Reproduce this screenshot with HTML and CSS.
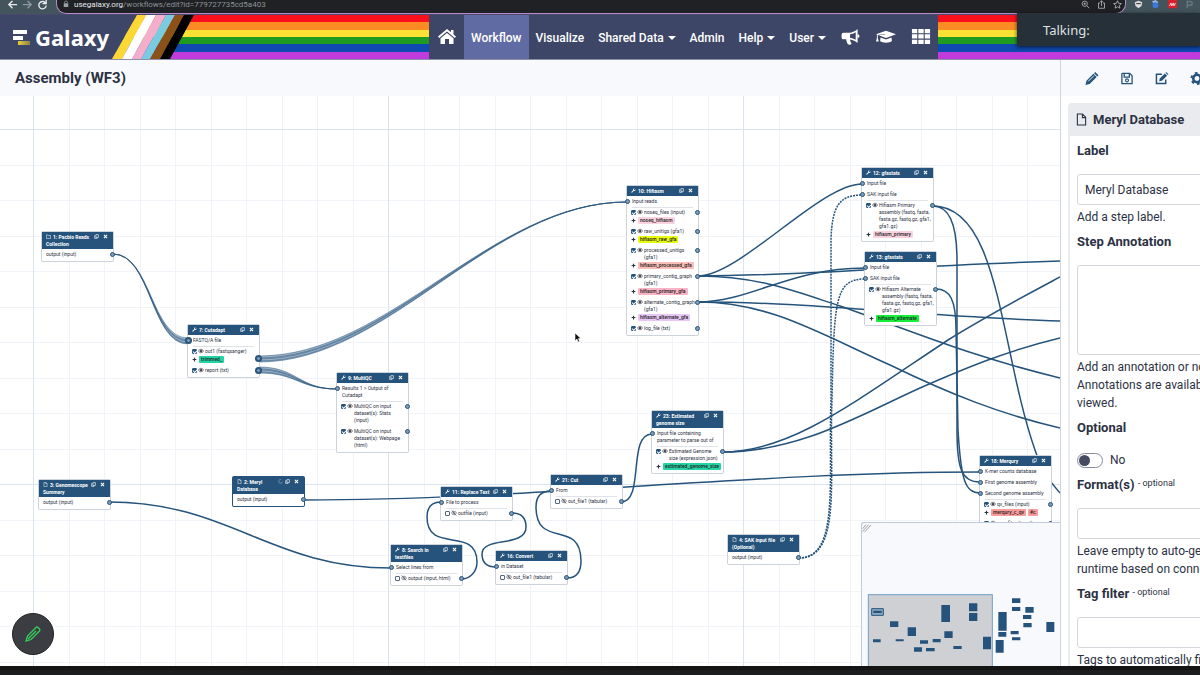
FILE: index.html
```
<!DOCTYPE html>
<html lang="en">
<head>
<meta charset="utf-8">
<title>Galaxy | Workflow Editor</title>
<link rel="stylesheet" href="styles.css">
</head>
<body>
<svg class="sprite" aria-hidden="true">
  <symbol id="wrench" viewBox="0 0 16 16"><path d="M15 4a4.500 4.500 0 0 1-6 5L4 14.500a1.800 1.800 0 0 1-2.500-2.500L7 7a4.500 4.500 0 0 1 5-6L9.500 3.500l.5 2.500 2.500.5z"/></symbol>
  <symbol id="file" viewBox="0 0 16 16"><path d="M3 1h6l4 4v10H3zM9 1v4h4" fill="none" stroke="currentColor" stroke-width="1.600"/></symbol>
  <symbol id="folder" viewBox="0 0 16 16"><path d="M1 3h5l2 2h7v9H1z" fill="none" stroke="currentColor" stroke-width="1.800"/></symbol>
  <symbol id="copy" viewBox="0 0 16 16"><path d="M6 2h8v9H6zM4 5H2v9h8v-2" fill="none" stroke="currentColor" stroke-width="2"/></symbol>
  <symbol id="close" viewBox="0 0 16 16"><path d="M3 3l10 10M13 3L3 13" fill="none" stroke="currentColor" stroke-width="3.500"/></symbol>
  <symbol id="spin" viewBox="0 0 16 16"><path d="M10 2a6 6 0 1 0 4 7" fill="none" stroke="currentColor" stroke-width="1.500" opacity=".7"/></symbol>
  <symbol id="eye" viewBox="0 0 16 16"><path d="M1 8c4-6 10-6 14 0-4 6-10 6-14 0z" fill="none" stroke="currentColor" stroke-width="1.800"/><circle cx="8" cy="8" r="3"/></symbol>
  <symbol id="eye-off" viewBox="0 0 16 16"><path d="M1 8c4-6 10-6 14 0-4 6-10 6-14 0zM2 1l12 14" fill="none" stroke="currentColor" stroke-width="1.500"/><circle cx="8" cy="8" r="2"/></symbol>
  <symbol id="plus" viewBox="0 0 16 16"><path d="M8 2v12M2 8h12" stroke="currentColor" stroke-width="3.500"/></symbol>
</svg>

<div class="browser">
  <div class="browser-nav">
    <svg class="arrow" viewBox="0 0 12 12"><path d="M11 5H2M6 1L2 5l4 4" /></svg>
    <svg class="arrow dim" viewBox="0 0 12 12"><path d="M1 5h9M6 1l4 4-4 4" /></svg>
    <svg class="arrow" viewBox="0 0 12 12"><path d="M9 3a4 4 0 1 0 1 3M10 0v4H6" /></svg>
  </div>
  <div class="address">
    <svg class="lock" viewBox="0 0 8 10"><path d="M1 4h6v5H1z"/><path d="M2 4V3a2 2 0 0 1 4 0v1" fill="none" stroke="currentColor"/></svg>
    <span class="host">usegalaxy.org<span class="path">/workflows/edit?id=779727735cd5a403</span></span>
    <span class="address-tools">
      <svg viewBox="0 0 12 12"><circle cx="5" cy="5" r="3.500"/><path d="M8 8l3 3M3.500 5h3M5 3.500v3"/></svg>
      <svg viewBox="0 0 12 12"><path d="M4 4H2v7h8V4H8M6 8V1M4 3l2-2 2 2"/></svg>
      <svg viewBox="0 0 12 12"><path d="M6 1l1.500 3.400 3.700.4-2.800 2.500.8 3.600L6 9.100l-3.200 1.800.8-3.600L.8 4.800l3.700-.4z"/></svg>
    </span>
  </div>
  <div class="extensions">
    <svg viewBox="0 0 12 12"><path d="M1 3l5-2 5 2-1 5-4 3-4-3z" fill="#d8dadc"/><path d="M3 4h6v1.500H3z" fill="#444"/></svg>
    <svg viewBox="0 0 12 12"><path d="M1 2l5-2 4 3-4 3z" fill="#9db8e8"/><circle cx="6" cy="7" r="4" fill="#3c78d8"/></svg>
    <svg viewBox="0 0 12 12"><path d="M0 0h12v11H0z" fill="#d81f2a"/><path d="M2 8l2-4 1 4 2-4 1 4 2-4" fill="none" stroke="#fff"/></svg>
    <svg viewBox="0 0 12 12"><path d="M3 11V2h4a2 2 0 0 1 0 5H3" fill="none" stroke="#68777d" stroke-width="2"/></svg>
  </div>
</div>

<header class="masthead">
  <a class="brand" href="#">
    <svg class="brand-mark" viewBox="0 0 17 15"><defs><linearGradient id="gold"><stop offset="0" stop-color="#e8cf3a"/><stop offset="1" stop-color="#8a8250"/></linearGradient></defs><path d="M0 0h14v4H0zM0 6h10v4H0z" fill="#fff"/><path d="M5 11h12v4H5z" fill="url(#gold)"/></svg>
    <span>Galaxy</span>
  </a>
  <div class="flag flag-left">
    <svg class="chevrons" viewBox="0 0 82 44" preserveAspectRatio="none">
      <path d="M0 0h25L0 44z" fill="#3e4667"/>
      <path d="M25 0h9L10 44H0z" fill="#fdd835"/>
      <path d="M34 0h10L20 44H10z" fill="#fff"/>
      <path d="M44 0h10L29 44h-9z" fill="#f4aecb"/>
      <path d="M54 0h9L38 44h-9z" fill="#7acbe2"/>
      <path d="M63 0h9L48 44H38z" fill="#8a5219"/>
      <path d="M72 0h10L58 44H48z" fill="#000"/>
    </svg>
  </div>
  <nav class="menu">
    <a href="#" class="home" aria-label="Home"><svg viewBox="0 0 18 16"><path d="M9 0l4 3.300V1h2.500v4.400L18 7.600l-1.200 1.300L9 2.600 1.200 8.900 0 7.600z"/><path d="M9 4l6.500 5.300V15H11v-5H7v5H2.500V9.300z"/></svg></a>
    <a href="#" class="active">Workflow</a>
    <a href="#">Visualize</a>
    <a href="#" class="drop">Shared Data</a>
    <a href="#">Admin</a>
    <a href="#" class="drop">Help</a>
    <a href="#" class="drop">User</a>
    <a href="#" class="glyph" aria-label="Notifications"><svg viewBox="0 0 20 17"><path d="M17 0v15c-2-2-5-3.500-8-3.800 0 2 1 3 1.600 4.500-1 1.300-3 1.300-4.100.3C5.500 14 5 13 5 11H2a2 2 0 0 1-2-2V6a2 2 0 0 1 2-2h6c3.500 0 7-2 9-4zm-2 3.500c-2 1.300-4 2-6 2.200v3.700c2 .2 4 .9 6 2.100z" fill-rule="evenodd"/><path d="M17 5.500a2 2 0 0 1 0 4z"/></svg></a>
    <a href="#" class="glyph" aria-label="Tutorials"><svg viewBox="0 0 22 16"><path d="M11 1l11 4-11 4L3 6.200l7-1V4.600L2 5.800V9l1 4H0l1-4V5.300L0 5z"/><path d="M5 8.500l6 2.200 6-2.200.5 4C15 15 7 15 4.500 12.500z"/></svg></a>
    <a href="#" class="glyph" aria-label="Apps"><svg viewBox="0 0 17 15"><path d="M0 0h5v4H0zM6 0h5v4H6zM12 0h5v4h-5zM0 5h5v4H0zM6 5h5v4H6zM12 5h5v4h-5zM0 10h5v4H0zM6 10h5v4H6zM12 10h5v4h-5z"/></svg></a>
  </nav>
  <div class="flag flag-right"></div>
</header>
<div class="talking">Talking:</div>

<main class="workspace">
  <section class="editor">
    <h1 class="title">Assembly (WF3)</h1>
    <div class="canvas">
      <svg class="wires">
        <defs>
          <pattern id="grid" x="33" y="129" width="355" height="355" patternUnits="userSpaceOnUse">
            <path class="grid-minor" d="M36.500 0v355M71.500 0v355M107.500 0v355M142.500 0v355M178.500 0v355M213.500 0v355M249.500 0v355M284.500 0v355M320.500 0v355M0 36.500h355M0 71.500h355M0 107.500h355M0 142.500h355M0 178.500h355M0 213.500h355M0 249.500h355M0 284.500h355M0 320.500h355"/>
            <path class="grid-major" d="M.5 0v355M0 .5h355"/>
          </pattern>
        </defs>
        <g transform="translate(0 -96)">
          <rect width="4000" height="3000" fill="url(#grid)"/>
          <g class="fan-fill">
            <path d="M113 254C151 254 151 338 188 338V344C151 344 151 254 113 254z"/>
            <path d="M259 356C390 356 490 202 627 202C490 202 390 362 259 362z"/>
            <path d="M259 367C297 367 299 389 337 389C299 389 297 373 259 373z"/>
          </g>
          <g class="fan">
            <path d="M113 254C151 254 151 338 188 338M113 254C151 254 151 340 188 340M113 254C151 254 151 341 188 341M113 254C151 254 151 343 188 343M113 254C151 254 151 344 188 344"/>
            <path d="M259 356C390 356 490 202 627 202M259 358C390 358 490 202 627 202M259 359C390 359 490 202 627 202M259 361C390 361 490 202 627 202M259 362C390 362 490 202 627 202"/>
            <path d="M259 367C297 367 299 389 337 389M259 369C297 369 299 389 337 389M259 370C297 370 299 389 337 389M259 372C297 372 299 389 337 389M259 373C297 373 299 389 337 389"/>
          </g>
          <g class="wire">
            <path d="M304 500C530 500 754 472 980 472"/>
            <path d="M109 502C230 502 270 568 391 568"/>
            <path d="M461 579C470 579 477 572 477 562C477 525 427 555 427 517C427 507 432 502 441 502"/>
            <path d="M512 513C521 513 526 518 526 527C526 548 482 536 482 554C482 563 487 567 496 567"/>
            <path d="M567 578C576 578 581 572 581 561C581 518 536 550 536 507C536 497 541 491 551 491"/>
            <path d="M621 502C645 502 627 434 652 434"/>
            <path d="M722 452C790 452 850 405 948 340C990 314 1030 293 1060 277"/>
            <path d="M722 452C800 452 860 415 920 388C970 366 1010 350 1060 338"/>
            <path d="M698 276C740 276 820 184 862 184"/>
            <path d="M698 276C800 276 900 266 1060 261"/>
            <path d="M698 276C760 276 800 293 840 306C920 334 970 356 1060 378"/>
            <path d="M698 302C750 302 790 268 865 268"/>
            <path d="M698 302C820 302 920 317 1060 321"/>
            <path d="M698 302C770 302 820 334 890 365C950 394 1000 414 1060 428"/>
            <path d="M933 206C948 206 957 222 957 260L957 430C957 470 962 482 980 482"/>
            <path d="M933 206C1000 206 1000 350 1035 450C1040 467 1048 480 1060 493"/>
            <path d="M936 289C950 289 956 300 956 330L958 430C961 480 965 493 980 493"/>
            <g class="dotted">
              <path d="M799 558C840 558 828 480 831 400L831 240C832 205 840 195 862 195"/>
              <path d="M799 558C842 558 829 480 832 400C834 300 835 279 865 279"/>
            </g>
          </g>
        </g>
      </svg>

      <article class="node pacbio">
        <h2><svg><use href="#folder"/></svg><span>1: Pacbio Reads<br>Collection</span><svg><use href="#copy"/></svg><svg><use href="#close"/></svg></h2>
        <div class="outs bare"><div class="out">output (input)</div></div>
      </article>
      <article class="node cutadapt">
        <h2><svg><use href="#wrench"/></svg><span>7: Cutadapt</span><svg><use href="#copy"/></svg><svg><use href="#close"/></svg></h2>
        <div class="in many">FASTQ/A file</div>
        <div class="outs">
          <div class="out many low"><input type="checkbox" checked aria-label="out1"><svg><use href="#eye"/></svg><span>out1 (fastqsanger)</span><div class="tags"><svg><use href="#plus"/></svg><b class="tag green">trimmed_</b></div></div>
          <div class="out many"><input type="checkbox" checked aria-label="report"><svg><use href="#eye"/></svg><span>report (txt)</span></div>
        </div>
      </article>
      <article class="node multiqc">
        <h2><svg><use href="#wrench"/></svg><span>9: MultiQC</span><svg><use href="#copy"/></svg><svg><use href="#close"/></svg></h2>
        <div class="in">Results 1 &gt; Output of<br>Cutadapt</div>
        <div class="outs">
          <div class="out"><input type="checkbox" checked aria-label="Stats"><svg><use href="#eye"/></svg><span>MultiQC on input<br>dataset(s): Stats<br>(input)</span></div>
          <div class="out"><input type="checkbox" checked aria-label="Webpage"><svg><use href="#eye"/></svg><span>MultiQC on input<br>dataset(s): Webpage<br>(html)</span></div>
        </div>
      </article>
      <article class="node genomescope">
        <h2><svg><use href="#file"/></svg><span>3: Genomescope<br>Summary</span><svg><use href="#copy"/></svg><svg><use href="#close"/></svg></h2>
        <div class="outs bare"><div class="out">output (input)</div></div>
      </article>
      <article class="node meryl selected">
        <h2><svg><use href="#file"/></svg><span>2: Meryl<br>Database</span><svg><use href="#spin"/></svg><svg><use href="#copy"/></svg><svg><use href="#close"/></svg></h2>
        <div class="outs bare"><div class="out">output (input)</div></div>
      </article>
      <article class="node replace">
        <h2><svg><use href="#wrench"/></svg><span>11: Replace Text</span><svg><use href="#copy"/></svg><svg><use href="#close"/></svg></h2>
        <div class="in">File to process</div>
        <div class="outs"><div class="out"><input type="checkbox" aria-label="outfile"><svg><use href="#eye-off"/></svg><span>outfile (input)</span></div></div>
      </article>
      <article class="node search">
        <h2><svg><use href="#wrench"/></svg><span>8: Search in<br>textfiles</span><svg><use href="#copy"/></svg><svg><use href="#close"/></svg></h2>
        <div class="in">Select lines from</div>
        <div class="outs"><div class="out"><input type="checkbox" aria-label="output"><svg><use href="#eye-off"/></svg><span>output (input, html)</span></div></div>
      </article>
      <article class="node convert">
        <h2><svg><use href="#wrench"/></svg><span>16: Convert</span><svg><use href="#copy"/></svg><svg><use href="#close"/></svg></h2>
        <div class="in">in Dataset</div>
        <div class="outs"><div class="out"><input type="checkbox" aria-label="out_file1"><svg><use href="#eye-off"/></svg><span>out_file1 (tabular)</span></div></div>
      </article>
      <article class="node cut">
        <h2><svg><use href="#wrench"/></svg><span>21: Cut</span><svg><use href="#copy"/></svg><svg><use href="#close"/></svg></h2>
        <div class="in">From</div>
        <div class="outs"><div class="out"><input type="checkbox" aria-label="out_file1"><svg><use href="#eye-off"/></svg><span>out_file1 (tabular)</span></div></div>
      </article>
      <article class="node estimated">
        <h2><svg><use href="#wrench"/></svg><span>23: Estimated<br>genome size</span><svg><use href="#copy"/></svg><svg><use href="#close"/></svg></h2>
        <div class="in">Input file containing<br>parameter to parse out of</div>
        <div class="outs"><div class="out"><input type="checkbox" checked aria-label="Estimated Genome size"><svg><use href="#eye"/></svg><span>Estimated Genome<br>size (expression.json)</span><div class="tags"><svg><use href="#plus"/></svg><b class="tag green">estimated_genome_size</b></div></div></div>
      </article>
      <article class="node sak">
        <h2><svg><use href="#file"/></svg><span>4: SAK input file<br>(Optional)</span><svg><use href="#copy"/></svg><svg><use href="#close"/></svg></h2>
        <div class="outs bare"><div class="out">output (input)</div></div>
      </article>
      <article class="node hifiasm">
        <h2><svg><use href="#wrench"/></svg><span>10: Hifiasm</span><svg><use href="#copy"/></svg><svg><use href="#close"/></svg></h2>
        <div class="in">Input reads</div>
        <div class="outs">
          <div class="out"><input type="checkbox" checked aria-label="noseq_files"><svg><use href="#eye"/></svg><span>noseq_files (input)</span><div class="tags"><svg><use href="#plus"/></svg><b class="tag rose">noseq_hifiasm</b></div></div>
          <div class="out"><input type="checkbox" checked aria-label="raw_unitigs"><svg><use href="#eye"/></svg><span>raw_unitigs (gfa1)</span><div class="tags"><svg><use href="#plus"/></svg><b class="tag yellow">hifiasm_raw_gfa</b></div></div>
          <div class="out"><input type="checkbox" checked aria-label="processed_unitigs"><svg><use href="#eye"/></svg><span>processed_unitigs<br>(gfa1)</span><div class="tags"><svg><use href="#plus"/></svg><b class="tag salmon">hifiasm_processed_gfa</b></div></div>
          <div class="out"><input type="checkbox" checked aria-label="primary_contig_graph"><svg><use href="#eye"/></svg><span>primary_contig_graph<br>(gfa1)</span><div class="tags"><svg><use href="#plus"/></svg><b class="tag pink">hifiasm_primary_gfa</b></div></div>
          <div class="out"><input type="checkbox" checked aria-label="alternate_contig_graph"><svg><use href="#eye"/></svg><span>alternate_contig_graph<br>(gfa1)</span><div class="tags"><svg><use href="#plus"/></svg><b class="tag violet">hifiasm_alternate_gfa</b></div></div>
          <div class="out"><input type="checkbox" checked aria-label="log_file"><svg><use href="#eye"/></svg><span>log_file (txt)</span></div>
        </div>
      </article>
      <article class="node gfa-primary">
        <h2><svg><use href="#wrench"/></svg><span>12: gfastats</span><svg><use href="#copy"/></svg><svg><use href="#close"/></svg></h2>
        <div class="in">Input file</div>
        <div class="in">SAK input file</div>
        <div class="outs"><div class="out"><input type="checkbox" checked aria-label="Hifiasm Primary assembly"><svg><use href="#eye"/></svg><span>Hifiasm Primary<br>assembly (fastq, fasta,<br>fasta.gz, fastq.gz, gfa1,<br>gfa1.gz)</span><div class="tags"><svg><use href="#plus"/></svg><b class="tag rose">hifiasm_primary</b></div></div></div>
      </article>
      <article class="node gfa-alternate">
        <h2><svg><use href="#wrench"/></svg><span>13: gfastats</span><svg><use href="#copy"/></svg><svg><use href="#close"/></svg></h2>
        <div class="in">Input file</div>
        <div class="in">SAK input file</div>
        <div class="outs"><div class="out"><input type="checkbox" checked aria-label="Hifiasm Alternate assembly"><svg><use href="#eye"/></svg><span>Hifiasm Alternate<br>assembly (fastq, fasta,<br>fasta.gz, fastq.gz, gfa1,<br>gfa1.gz)</span><div class="tags"><svg><use href="#plus"/></svg><b class="tag lime">hifiasm_alternate</b></div></div></div>
      </article>
      <article class="node merqury">
        <h2><svg><use href="#wrench"/></svg><span>18: Merqury</span><svg><use href="#copy"/></svg><svg><use href="#close"/></svg></h2>
        <div class="in">K-mer counts database</div>
        <div class="in">First genome assembly</div>
        <div class="in">Second genome assembly</div>
        <div class="outs">
          <div class="out"><input type="checkbox" checked aria-label="qv_files"><svg><use href="#eye"/></svg><span>qv_files (input)</span><div class="tags"><svg><use href="#plus"/></svg><b class="tag red">merqury_c_qv</b><b class="tag red">#c</b></div></div>
          <div class="out"><input type="checkbox" checked aria-label="png_files"><svg><use href="#eye"/></svg><span>png_files (input)</span></div>
        </div>
      </article>

      <svg class="cursor" viewBox="0 0 8 12"><path d="M1 1v8l2-2 1 3 1.500-.6L4.500 6.500H7z" fill="#111" stroke="#fff" stroke-width=".6"/></svg>

      <button class="pen" aria-label="Edit annotations"><svg viewBox="0 0 18 18"><path d="M2 16l1.500-5L12 2.500q1-1 2 0l1.500 1.500q1 1 0 2L7 14.500zM4 14l8-8" /></svg></button>

      <svg class="minimap" viewBox="36 219 594 429">
        <path d="M38 236l10-12M38 244l18-20M43 247l20-22" stroke="#777" stroke-width="2"/>
        <rect x="55" y="434" width="372" height="230" fill="#cfd0d4" stroke="#6f9fc6" stroke-width="3"/>
        <g fill="#25537b">
          <path d="M274 465h26v51h-26zM357 460h25v24h-25zM357 489h25v24h-25zM120 514h25v17h-25zM173 532h25v26h-25zM283 544h25v20h-25zM69 568h23v9H69zM137 568h24v6h-24zM210 571h24v10h-24zM248 567h24v10h-24zM192 592h24v13h-24zM228 594h26v10h-26zM310 588h25v9h-25zM399 560h24v38h-24z"/>
          <path d="M486 445h25v14h-25zM486 471h25v12h-25zM526 471h25v17h-25zM445 486h25v56h-25zM519 495h25v12h-25zM520 519h25v13h-25zM445 546h24v14h-24zM482 543h24v10h-24zM486 562h25v9h-25zM437 570h24v38h-24zM589 516h24v30h-24z"/>
        </g>
        <path d="M65 476h35v20H65z" fill="#8fa8c0" stroke="#25537b" stroke-width="3"/><path d="M70 482h25v7H70z" fill="#25537b"/>
      </svg>
    </div>
  </section>

  <aside class="panel">
    <div class="toolbar">
      <button aria-label="Edit attributes"><svg viewBox="0 0 14 14"><path d="M0 14l1-4.500L8.500 2 12 5.500 4.500 13zM9.200 1.300L10.500 0l3.500 3.500-1.300 1.300z"/><path d="M3 10l6-6" stroke="#f8f9fc"/></svg></button>
      <button aria-label="Save workflow"><svg viewBox="0 0 14 14"><path d="M2 1.500h8L12.500 4v8.500h-11V2zM4 2v3.500h5.500V2" fill="none" stroke="currentColor" stroke-width="1.400"/><circle cx="7" cy="9" r="1.600" fill="none" stroke="currentColor" stroke-width="1.200"/></svg></button>
      <button aria-label="Edit report"><svg viewBox="0 0 14 14"><path d="M7 2.500H1v10h10V8" fill="none" stroke="currentColor" stroke-width="1.600"/><path d="M4 10l.5-3L10 1.500 12.500 4 7 9.500zM10.700.8l.8-.8L14 2.500l-.8.8z"/></svg></button>
      <button aria-label="Workflow options"><svg viewBox="0 0 14 14"><circle cx="7" cy="7" r="4" fill="none" stroke="currentColor" stroke-width="2.800"/><circle cx="7" cy="7" r="6" fill="none" stroke="currentColor" stroke-width="2" stroke-dasharray="3 3.280"/></svg></button>
    </div>
    <form class="card">
      <h2 class="card-head"><svg viewBox="0 0 12 14"><path d="M1.500 1h5.500l3.500 3.500V13h-9zM7 1v4h3.500"/></svg>Meryl Database</h2>
      <div class="fields">
        <div class="field">
          <label for="label">Label</label>
          <input id="label" type="text" value="Meryl Database">
          <p>Add a step label.</p>
        </div>
        <div class="field">
          <label for="annotation">Step Annotation</label>
          <textarea id="annotation"></textarea>
          <p>Add an annotation or notes to this step.<br>Annotations are available when a workflow is<br>viewed.</p>
        </div>
        <div class="field">
          <label for="optional">Optional</label>
          <div class="switch"><input id="optional" type="checkbox"><span>No</span></div>
        </div>
        <div class="field">
          <label for="formats">Format(s) <small>- optional</small></label>
          <input id="formats" type="text">
          <p>Leave empty to auto-generate filtered list at<br>runtime based on connections.</p>
        </div>
        <div class="field">
          <label for="tagfilter">Tag filter <small>- optional</small></label>
          <input id="tagfilter" type="text">
          <p>Tags to automatically filter inputs</p>
        </div>
      </div>
    </form>
  </aside>
</main>
<footer class="dock"></footer>
</body>
</html>
```
FILE: styles.css
```
:root {
  --navy: #25537b;
  --masthead: #3e4667;
  --ink: #2c3143;
  --pale: #f8f9fc;
}
*, *::before, *::after { box-sizing: border-box; }
body {
  margin: 0;
  height: 100vh;
  display: flex;
  flex-direction: column;
  overflow: hidden;
  background: #fff;
  color: var(--ink);
  font: 12px/18px Roboto, "Liberation Sans", sans-serif;
}
h1, h2, p { margin: 0; }
a { color: inherit; text-decoration: none; }
button { padding: 0; border: 0; background: none; color: inherit; }
svg { display: block; fill: currentColor; }
.sprite { position: absolute; width: 0; height: 0; }

/* browser chrome */
.browser {
  flex: 0 0 15px;
  display: flex;
  background: #44545c;
  border-bottom: 1px solid #4c4a6c;
  color: #e8eaed;
}
.browser-nav { flex: 0 0 56px; display: flex; gap: 4px; padding-left: 7px; }
.arrow { width: 11px; height: 11px; fill: none; stroke: #e8eaed; stroke-width: 1.5; }
.dim { stroke: #8e9a9f; }
.address {
  flex: 1;
  height: 14px;
  display: flex;
  gap: 5px;
  padding-left: 6px;
  background: #1f2124;
  border: solid #b48acb;
  border-width: 0 1px 1px;
  border-radius: 0 0 10px 10px;
}
.lock { width: 6px; height: 8px; color: #9aa0a6; }
.host { font-size: 8px; line-height: 10px; }
.path { color: #8d9196; }
.address-tools { margin-left: auto; display: flex; gap: 7px; padding-right: 3px; }
.address-tools svg { width: 9px; height: 9px; fill: none; stroke: #c4c7ca; }
.extensions { flex: 0 0 74px; display: flex; gap: 8px; padding-left: 8px; }
.extensions svg { width: 9px; height: 9px; }

/* masthead */
.masthead {
  flex: 0 0 45px;
  min-height: 0;
  display: flex;
  background: var(--masthead);
  border-bottom: 1px solid #8c90a8;
  color: #fff;
}
.brand {
  flex: 0 0 112px;
  display: flex;
  align-items: center;
  gap: 5px;
  padding-left: 13px;
  font: bold 22px/40px "Noto Sans", "Open Sans", sans-serif;
}
.brand-mark { width: 17px; height: 15px; }
.flag {
  background: linear-gradient(#fb0f1c 0 17%, #fb8c24 17% 33%, #fbe134 33% 50%, #1f9b22 50% 67%, #1049b0 67% 83%, #c03bdc 83%);
}
.flag-left { flex: 0 0 317px; }
.flag-right { flex: 1; }
.chevrons { width: 82px; height: 100%; }
.menu { display: flex; font-size: 12px; font-weight: 500; line-height: 20px; }
.menu a { display: flex; align-items: center; padding: 1px 7px 0; }
.menu .home { padding: 0 8px 0 9px; }
.home svg { width: 18px; height: 16px; }
.menu .active { background: #5f6ba2; }
.drop::after {
  content: "";
  margin-left: 4px;
  border: 4px solid transparent;
  border-top-color: #fff;
  border-bottom: 0;
}
.menu .glyph { padding: 0 7px 0 8px; }
.glyph svg { width: 20px; height: 16px; }
.talking {
  position: absolute;
  top: 13px;
  right: 0;
  width: 183px;
  height: 33px;
  padding-left: 26px;
  background: #263038;
  box-shadow: 0 1px 4px rgba(0, 0, 0, .7);
  color: #dfe2e4;
  font: 13px/35px "Noto Sans", sans-serif;
}

/* editor */
.workspace { flex: 1; min-height: 0; display: flex; }
.editor { flex: 1; min-width: 0; display: flex; flex-direction: column; }
.title {
  flex: 0 0 36px;
  padding-left: 15px;
  background: var(--pale);
  font-size: 15px;
  line-height: 36px;
}
.canvas { flex: 1; position: relative; overflow: hidden; }
.wires { position: absolute; width: 100%; height: 100%; }
.grid-minor { fill: none; stroke: #f0f3f7; }
.grid-major { fill: none; stroke: #d9e4ee; }
.wire, .fan { fill: none; stroke: var(--navy); stroke-width: 1.5; }
.fan { stroke-width: 1; stroke-opacity: .5; }
.fan-fill { fill: #9fb3c7; }
.dotted { stroke-dasharray: 2 1; }

.node {
  position: absolute;
  width: 71px;
  background: #fff;
  border-radius: 1px;
  box-shadow: 0 0 0 1px #ccd3dc;
  font-size: 5px;
  line-height: 7px;
  white-space: nowrap;
}
.selected { box-shadow: 0 0 0 1px var(--navy); }
.node h2 {
  display: flex;
  gap: 2px;
  padding: 2px 5px 1px 4px;
  background: var(--navy);
  color: #fff;
  font-size: 5px;
  line-height: 7px;
}
/* the heading icon shares the first line; later lines start under it */
.node h2 svg { flex: none; width: 5px; height: 5px; }
.node h2 svg:first-child { margin-right: -7px; }
.node h2 svg:last-child { margin-left: 2px; }
.node h2 span { flex: 1; text-indent: 7px; }
.in { position: relative; padding: 2px 5px; }
.outs { margin: 0 5px; border-top: 1px solid #dfe3e8; }
.bare { border-color: transparent; }
.out {
  position: relative;
  display: grid;
  grid-template-columns: 5px 6px 1fr;
  column-gap: 1px;
  margin: 0 -5px;
  padding: 1px 0 3px 4px;
}
.bare .out { display: block; }
.in::before, .out::after {
  content: "";
  position: absolute;
  top: 3px;
  left: -2px;
  width: 5px;
  height: 5px;
  border: 1px solid var(--navy);
  border-radius: 50%;
  background: #7f9ab3;
}
.out::after { top: 2px; left: auto; right: -2px; }
.many::before, .many.out::after { box-shadow: 0 0 0 1px var(--navy); }
.low.out::after { top: 9px; }
.out > svg { width: 6px; height: 6px; }
.out input {
  appearance: none;
  width: 5px;
  height: 5px;
  margin: 1px 0 0;
  border: 1px solid #55657a;
  border-radius: 1px;
}
.out input:checked { background: var(--navy); border-color: var(--navy); }
.out input:checked::after {
  content: "";
  display: block;
  width: 4px;
  height: 3px;
  border: solid #fff;
  border-width: 0 0 1px 1px;
  transform: rotate(-45deg);
}
.tags { grid-column: 1 / -1; display: flex; align-items: center; gap: 2px; height: 8px; }
.tags svg { width: 5px; height: 5px; }
.tag { padding: 0 2px; border-radius: 1px; font-weight: 500; color: #222; }
.green { background: #25d3a5; }
.rose { background: #fbd3e0; }
.yellow { background: #e8fb12; }
.salmon { background: #fbbdb8; }
.pink { background: #fbb4c6; }
.violet { background: #e8c6f6; }
.lime { background: #16ee3c; }
.red { background: #fb9a9c; }

/* node positions on the canvas */
.pacbio { left: 42px; top: 136px; }
.cutadapt { left: 188px; top: 229px; }
.multiqc { left: 337px; top: 277px; }
.genomescope { left: 39px; top: 384px; }
.meryl { left: 233px; top: 381px; }
.replace { left: 441px; top: 391px; }
.search { left: 391px; top: 449px; }
.convert { left: 496px; top: 455px; }
.cut { left: 551px; top: 379px; }
.estimated { left: 652px; top: 315px; }
.sak { left: 728px; top: 439px; }
.hifiasm { left: 627px; top: 90px; }
.gfa-primary { left: 862px; top: 72px; }
.gfa-alternate { left: 865px; top: 156px; }
.merqury { left: 980px; top: 360px; }

.cursor { position: absolute; left: 574px; top: 236px; width: 8px; height: 12px; }
.pen {
  position: absolute;
  left: 12px;
  bottom: 11px;
  width: 42px;
  height: 42px;
  display: grid;
  place-items: center;
  border: 1px solid #222;
  border-radius: 50%;
  background: #3b3d42;
}
.pen svg { width: 18px; height: 18px; fill: none; stroke: #35d05a; stroke-width: 1.3; }
.minimap {
  position: absolute;
  right: 0;
  bottom: 0;
  width: 199px;
  height: 144px;
  border: solid #bfcbd8;
  border-width: 1px 0 0 1px;
  border-radius: 3px 0 0;
  background: var(--pale);
}

/* side panel */
.panel { flex: 0 0 140px; overflow: hidden; border-left: 1px solid #cfd3da; }
.toolbar {
  width: 300px;
  height: 36px;
  display: flex;
  gap: 21px;
  align-items: center;
  padding-left: 24px;
  background: var(--pale);
  color: var(--navy);
}
.toolbar svg { width: 14px; height: 13px; }
.card {
  width: 290px;
  margin: 7px 0 0 7px;
  border: 2px solid #e9ebee;
  border-top: 0;
  border-radius: 4px;
}
.card-head {
  display: flex;
  align-items: center;
  gap: 6px;
  padding: 0 6px;
  background: #e9ebee;
  font-size: 13px;
  line-height: 33px;
}
.card-head svg { width: 11px; height: 13px; fill: none; stroke: currentColor; stroke-width: 1.2; }
.fields { display: flex; flex-direction: column; gap: 7px; padding: 6px 7px; }
.field { display: flex; flex-direction: column; white-space: nowrap; }
.field label { margin-bottom: 14px; font-size: 13px; font-weight: bold; }
.field small { font-size: 9px; font-weight: normal; vertical-align: 3px; line-height: 9px; }
.field > input, .field textarea {
  height: 31px;
  padding: 0 7px;
  border: 1px solid #d3d6da;
  border-radius: 3px;
  background: #fff;
  color: inherit;
  font: inherit;
}
.field textarea { height: 90px; resize: none; }
.field p { margin-top: 3px; }
.switch { display: flex; align-items: center; gap: 7px; }
.switch input {
  appearance: none;
  width: 26px;
  height: 15px;
  margin: 0;
  padding: 1px;
  border: 1px solid #85889a;
  border-radius: 8px;
}
.switch input::before {
  content: "";
  display: block;
  width: 11px;
  height: 11px;
  border-radius: 50%;
  background: #464a62;
}
.dock { flex: 0 0 9px; background: #1c1d1e; border-top: 4px solid #141414; }
```
